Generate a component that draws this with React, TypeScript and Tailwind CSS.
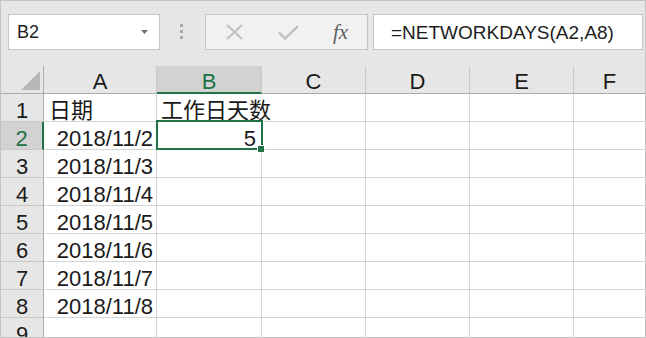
import React from 'react';

const green = '#217346';

const columns = ['A', 'B', 'C', 'D', 'E', 'F'];

const dates = ['2018/11/2', '2018/11/3', '2018/11/4', '2018/11/5', '2018/11/6', '2018/11/7', '2018/11/8'];

// cell contents by row number, columns A..F
const rows: { n: number; a?: string; b?: string; bAlign?: 'left' | 'right' }[] = [
  { n: 1, a: '日期', b: '工作日天数', bAlign: 'left' },
  ...dates.map((d, i) => ({ n: i + 2, a: d, b: i === 0 ? '5' : undefined, bAlign: 'right' as const })),
  { n: 9 },
];

const NameBox = () => (
  <div className="w-[152px] h-[36px] bg-white border border-[#c6c6c6] flex items-center justify-between pl-[8px] pr-[11px]">
    <span className="text-[18px] text-[#1e1e1e] leading-none">B2</span>
    <svg width="7" height="4" viewBox="0 0 7 4">
      <polygon points="0,0 7,0 3.5,4" fill="#6e6e6e" />
    </svg>
  </div>
);

const FormulaButtons = () => (
  <div className="w-[163px] h-[36px] bg-[#f1f1f1] border border-[#c6c6c6] flex items-center">
    <svg className="ml-[20px]" width="17" height="16" viewBox="0 0 17 16">
      <path d="M1 1 L16 15 M16 1 L1 15" stroke="#bdbdbd" strokeWidth="1.8" fill="none" />
    </svg>
    <svg className="ml-[35px]" width="21" height="15" viewBox="0 0 21 15">
      <path d="M1 7.5 L7 13.5 L20 1" stroke="#bdbdbd" strokeWidth="2.4" fill="none" />
    </svg>
    <span className="ml-[34px] font-['Liberation_Serif',serif] italic text-[21px] text-[#5f5f5f] leading-none">
      fx
    </span>
  </div>
);

export default function App() {
  return (
    <div className="relative w-[646px] h-[338px] overflow-hidden bg-[#e6e6e6] border border-[#c3c3c3] font-['Liberation_Sans','Noto_Sans_CJK_SC',sans-serif] text-[#1a1a1a]">
      {/* toolbar */}
      <div className="h-[65px] flex items-start pt-[13px] pl-[7px]">
        <NameBox />
        <div className="w-[3px] ml-[20px] mt-[10px] flex flex-col gap-[3px]">
          <div className="h-[3px] bg-[#a8a8a8]" />
          <div className="h-[3px] bg-[#a8a8a8]" />
          <div className="h-[3px] bg-[#a8a8a8]" />
        </div>
        <div className="ml-[22px]">
          <FormulaButtons />
        </div>
        <div className="ml-[5px] w-[270px] h-[36px] bg-white border border-[#c6c6c6] flex items-center pl-[17px]">
          <span className="text-[19px] leading-none text-[#1e1e1e] whitespace-nowrap">=NETWORKDAYS(A2,A8)</span>
        </div>
      </div>

      {/* sheet */}
      <div className="grid grid-cols-[43px_113px_105px_104px_104px_104px_71px] bg-white text-[22px]">
        {/* header row */}
        <div className="h-[28px] bg-[#e6e6e6] border-r border-b border-[#ababab] flex items-end justify-end pr-[3px] pb-[3px]">
          <svg width="19" height="19" viewBox="0 0 19 19">
            <polygon points="19,0 19,19 0,19" fill="#b7b7b7" />
          </svg>
        </div>
        {columns.map((c) =>
          c === 'B' ? (
            <div
              key={c}
              className="h-[28px] bg-[#d2d2d2] border-r border-r-[#c8c8c8] border-b-2 border-b-[#217346] text-center leading-[31px] text-[#217346]"
            >
              {c}
            </div>
          ) : (
            <div
              key={c}
              className={`h-[28px] bg-[#e6e6e6] border-b border-b-[#ababab] text-center leading-[31px] ${
                c === 'F' ? '' : 'border-r border-r-[#c8c8c8]'
              }`}
            >
              {c}
            </div>
          )
        )}

        {/* body rows */}
        {rows.map((r) => (
          <React.Fragment key={r.n}>
            <div
              className={`h-[28px] border-b border-b-[#c8c8c8] text-center leading-[33px] ${
                r.n === 2
                  ? 'bg-[#d2d2d2] border-r-2 border-r-[#217346] text-[#217346]'
                  : 'bg-[#e6e6e6] border-r border-r-[#ababab]'
              }`}
            >
              {r.n}
            </div>
            <div
              className={`h-[28px] border-r border-b border-[#d4d4d4] leading-[33px] whitespace-nowrap ${
                r.n === 1 ? 'text-left pl-[5px]' : 'text-right pr-[3px]'
              }`}
            >
              {r.a}
            </div>
            <div
              className={`h-[28px] border-b border-[#d4d4d4] leading-[33px] whitespace-nowrap ${
                r.n === 1 ? 'pl-[4px] text-left' : 'border-r pr-[5px] text-right'
              }`}
            >
              {r.b}
            </div>
            <div className="h-[28px] border-r border-b border-[#d4d4d4]" />
            <div className="h-[28px] border-r border-b border-[#d4d4d4]" />
            <div className="h-[28px] border-r border-b border-[#d4d4d4]" />
            <div className="h-[28px] border-b border-[#d4d4d4]" />
          </React.Fragment>
        ))}
      </div>

      {/* active cell B2 */}
      <div className="absolute left-[155px] top-[119px] w-[107px] h-[30px] border-2 border-[#217346]" />
      <div className="absolute left-[256px] top-[144px] w-[8px] h-[8px] bg-[#217346] border border-white" />
    </div>
  );
}
